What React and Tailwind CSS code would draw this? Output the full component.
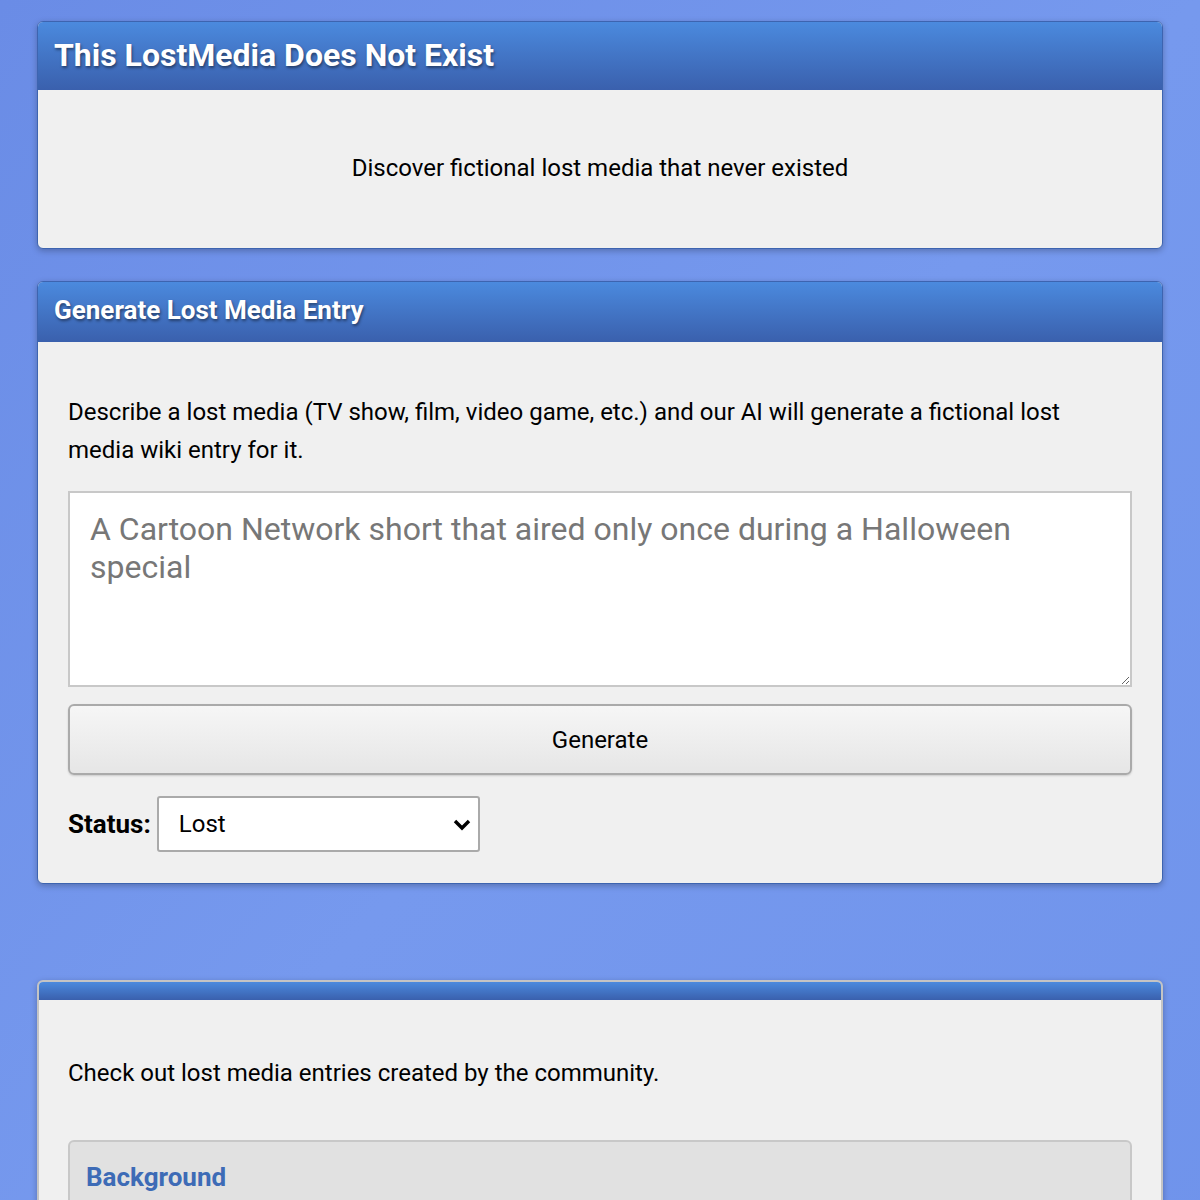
import { useState } from "react";

const Card = ({ title, border = "border-[#3d64b0]", headerClass = "h-[68px]", children }) => (
  <div className={`rounded-md border ${border} bg-[#f0f0f0] shadow-[0_2px_6px_rgba(0,0,0,0.25)] overflow-hidden`}>
    <div
      className={`${headerClass} flex items-center px-4 bg-gradient-to-b from-[#4b8ade] to-[#3a60ad] text-white font-bold [text-shadow:1px_2px_3px_rgba(0,0,0,0.45)]`}
    >
      {title}
    </div>
    {children}
  </div>
);

export default function App() {
  const [status, setStatus] = useState("lost");

  return (
    <div className="min-h-[1200px] bg-gradient-to-br from-[#6a8ce6] via-[#7699ee] to-[#6f93eb] px-[37px] pt-[21px] pb-10 font-['Roboto',sans-serif] text-black">
      {/* Title card */}
      <Card title={<span className="text-[32px] leading-none -mt-[2px]">This LostMedia Does Not Exist</span>}>
        <div className="h-[158px] flex items-center justify-center text-[24px] pb-[3px]">
          Discover fictional lost media that never existed
        </div>
      </Card>

      {/* Generator */}
      <div className="mt-[32px]">
        <Card
          title={<span className="text-[26px] leading-none -mt-[4px]">Generate Lost Media Entry</span>}
          headerClass="h-[60px]"
        >
          <div className="px-[30px] pt-[51px] pb-[31px]">
            <p className="text-[24px] leading-[38px]">
              Describe a lost media (TV show, film, video game, etc.) and our AI will generate a fictional lost
              media wiki entry for it.
            </p>
            <textarea
              className="mt-[22px] block w-full h-[196px] border-2 border-[#c8c8c8] bg-white pl-5 pr-10 pt-[17px] pb-[12px] text-[32px] leading-[38px] placeholder:text-[#777] outline-none"
              placeholder="A Cartoon Network short that aired only once during a Halloween special"
            />
            <button className="mt-[17px] w-full h-[71px] rounded-md border-2 border-[#aaa] bg-gradient-to-b from-[#f6f6f6] to-[#e6e6e6] text-[24px] shadow-[0_1px_2px_rgba(0,0,0,0.15)]">
              Generate
            </button>
            <div className="mt-[21px] flex items-center gap-[6px]">
              <span className="text-[26px] font-bold">Status:</span>
              <div className="relative">
                <select
                  value={status}
                  onChange={(e) => setStatus(e.target.value)}
                  className="appearance-none w-[323px] h-[56px] rounded-[3px] border-2 border-[#aaa] bg-white pl-5 text-[24px] outline-none"
                >
                  <option value="lost">Lost</option>
                  <option value="found">Found</option>
                  <option value="partial">Partially Found</option>
                </select>
                <svg
                  className="absolute right-[8px] top-1/2 -translate-y-1/2 pointer-events-none"
                  width="20"
                  height="14"
                  viewBox="0 0 20 14"
                >
                  <path d="M3 4l7 7 7-7" fill="none" stroke="#000" strokeWidth="3.4" />
                </svg>
              </div>
            </div>
          </div>
        </Card>
      </div>

      {/* Community entries */}
      <div className="mt-[96px]">
        <Card title={null} border="border-[#c4c4c4] border-2" headerClass="h-[18px]">
          <div className="px-[29px] pt-[55px] pb-[30px]">
            <p className="text-[24px]">Check out lost media entries created by the community.</p>
            <div className="mt-[49px] rounded-md border-2 border-[#c8c8c8] bg-[#e1e1e1] px-[16px] pt-[16px] pb-[60px]">
              <h3 className="text-[26px] font-bold text-[#3d6bb6]">Background</h3>
            </div>
          </div>
        </Card>
      </div>
    </div>
  );
}
